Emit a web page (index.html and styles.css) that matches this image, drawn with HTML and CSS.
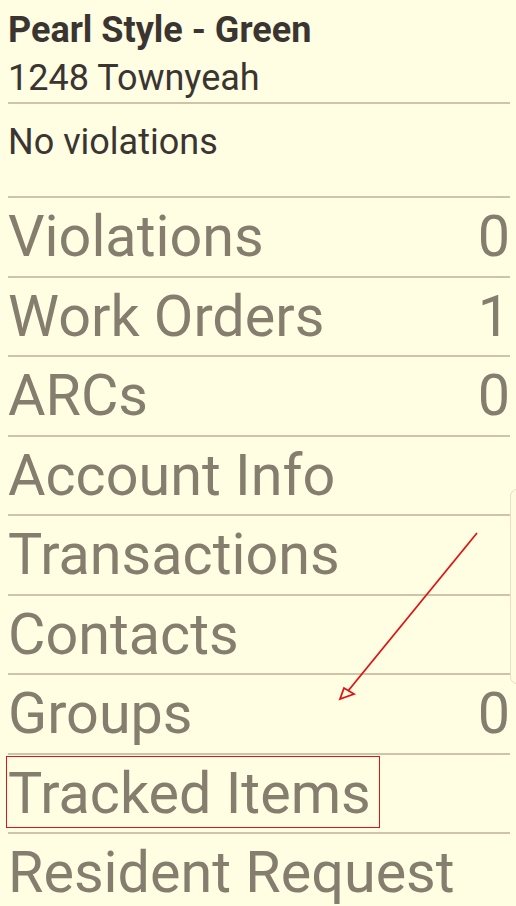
FILE: index.html
```html
<!DOCTYPE html>
<html lang="en">
<head>
    <meta charset="utf-8">
    <title>Pearl Style - Green</title>
    <link rel="stylesheet" href="styles.css">
</head>
<body>
    <div class="page">
        <div class="unit">
            <div class="unit-name">Pearl Style - Green</div>
            <div class="unit-address">1248 Townyeah</div>
        </div>
        <div class="status">No violations</div>

        <ul class="menu">
            <li class="menu-row"><span>Violations</span><span>0</span></li>
            <li class="menu-row"><span>Work Orders</span><span>1</span></li>
            <li class="menu-row"><span>ARCs</span><span>0</span></li>
            <li class="menu-row"><span>Account Info</span></li>
            <li class="menu-row"><span>Transactions</span></li>
            <li class="menu-row"><span>Contacts</span></li>
            <li class="menu-row"><span>Groups</span><span>0</span></li>
            <li class="menu-row"><span>Tracked Items</span><div class="highlight"></div></li>
            <li class="menu-row"><span>Resident Request</span></li>
        </ul>
    </div>

    <!-- annotation arrow drawn over the list -->
    <svg class="arrow" width="516" height="906" viewBox="0 0 516 906">
        <line x1="477" y1="533" x2="348" y2="691" stroke="#dd1515" stroke-width="1.8"/>
        <polygon points="340,699 344,688 354,694" fill="none" stroke="#dd1515" stroke-width="1.8"/>
    </svg>

    <div class="scroll-thumb"></div>
</body>
</html>
```

FILE: styles.css
```css
body {
    margin: 0;
    background: #fffde2;
    font-family: Roboto, 'Noto Sans', sans-serif;
    overflow: hidden;
    height: 906px;
    position: relative;
}
.page {
    padding: 0 6px 0 8px;
}
.unit {
    padding-top: 6px;
    border-bottom: 2px solid #cfc4a9;
    color: #3a3531;
    font-size: 36px;
    line-height: 48px;
}
.unit-name {
    font-weight: bold;
}
.status {
    padding: 14px 0 30px 0;
    border-bottom: 2px solid #cfc4a9;
    color: #3a3531;
    font-size: 36px;
    line-height: 48px;
}
.menu {
    list-style: none;
    margin: 0;
    padding: 0;
}
.menu-row {
    position: relative;
    display: flex;
    justify-content: space-between;
    height: 77.5px;
    line-height: 78px;
    border-bottom: 2px solid #cfc4a9;
    color: #857e6e;
    font-size: 57.5px;
}
.highlight {
    position: absolute;
    left: -2px;
    top: 1.5px;
    width: 372px;
    height: 70px;
    border: 1.5px solid #dd1515;
}
.arrow {
    position: absolute;
    left: 0;
    top: 0;
}
.scroll-thumb {
    position: absolute;
    left: 510px;
    top: 489px;
    width: 14px;
    height: 193px;
    border: 1px solid #e8dec3;
    border-radius: 7px;
    background: #fffbe0;
}
```
